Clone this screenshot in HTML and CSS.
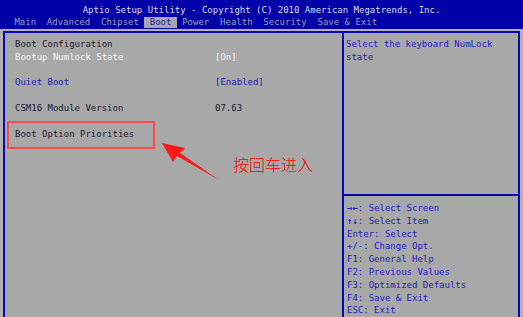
FILE: index.html
```html
<!DOCTYPE html>
<html lang="en">

<head>
    <meta charset="UTF-8">
    <title>Aptio Setup Utility - Boot</title>
    <link rel="stylesheet" href="styles.css">
</head>

<body>
    <div class="bios">
        <div class="header">
            <div class="title">Aptio Setup Utility - Copyright (C) 2010 American Megatrends, Inc.</div>
            <div class="tabs">
                <span class="tab">Main</span>
                <span class="tab">Advanced</span>
                <span class="tab">Chipset</span>
                <span class="tab active">Boot</span>
                <span class="tab">Power</span>
                <span class="tab">Health</span>
                <span class="tab">Security</span>
                <span class="tab">Save &amp; Exit</span>
            </div>
        </div>

        <div class="panel">
            <div class="settings">
                <div class="row heading"><span class="label">Boot Configuration</span></div>
                <div class="row selected"><span class="label">Bootup Numlock State</span><span class="value">[On]</span></div>
                <div class="row"></div>
                <div class="row option"><span class="label">Quiet Boot</span><span class="value">[Enabled]</span></div>
                <div class="row"></div>
                <div class="row heading"><span class="label">CSM16 Module Version</span><span class="value">07.63</span></div>
                <div class="row"></div>
                <div class="row heading"><span class="label">Boot Option Priorities</span></div>
            </div>
            <div class="side">
                <div class="description">Select the keyboard NumLock<br>state</div>
                <div class="help">
                    <div class="key"><b>&#x2192;&#x2190;</b>: Select Screen</div>
                    <div class="key"><b>&#x2191;&#x2193;</b>: Select Item</div>
                    <div class="key">Enter: Select</div>
                    <div class="key">+/-: Change Opt.</div>
                    <div class="key">F1: General Help</div>
                    <div class="key">F2: Previous Values</div>
                    <div class="key">F3: Optimized Defaults</div>
                    <div class="key">F4: Save &amp; Exit</div>
                    <div class="key">ESC: Exit</div>
                </div>
            </div>
        </div>

        <!-- annotation drawn over the screen -->
        <div class="mark"></div>
        <svg class="arrow" width="70" height="50" viewBox="155 135 70 50">
            <polygon points="162,143 185,148 180,153 219,180 177,156 173,162" fill="#ff1a1a" />
        </svg>
        <div class="note">按回车进入</div>
    </div>
</body>

</html>
```

FILE: styles.css
```css
* {
    margin: 0;
    padding: 0;
    box-sizing: border-box;
}

body {
    background-color: #b2b2b2;
    font-family: 'DejaVu Sans Mono', 'Liberation Mono', monospace;
    font-size: 9px;
}

.bios {
    position: relative;
    width: 523px;
    height: 317px;
    overflow: hidden;
}

.header {
    background-color: #0000a8;
    height: 29px;
}

.title {
    color: #dcdcec;
    text-align: center;
    padding-top: 3px;
    line-height: 14px;
}

.tabs {
    display: flex;
    padding-left: 9px;
    line-height: 11px;
}

.tab {
    color: #8aa0bc;
    padding: 0 5.4px;
    white-space: pre;
}

.tab.active {
    background-color: #a8a8a8;
    color: #1c1ca8;
}

.panel {
    display: flex;
    margin: 2px 3px 0 3px;
    height: 300px;
    background-color: #a8a8a8;
    border: 2px solid #0a0ab4;
    border-bottom: none;
}

.settings {
    width: 339px;
    padding: 5px 0 0 10px;
    line-height: 12.8px;
    border-right: 2px solid #0a0ab4;
}

.row {
    display: flex;
    height: 12.8px;
}

.label {
    width: 200px;
    white-space: pre;
}

.heading {
    color: #1a1a2a;
}

.selected {
    color: #f4f4f4;
}

.option {
    color: #1c1cb0;
}

.side {
    flex: 1;
    display: flex;
    flex-direction: column;
    color: #2222c0;
    line-height: 12.8px;
}

.description {
    height: 163px;
    padding: 5px 0 0 2px;
    border-bottom: 2px solid #0a0ab4;
}

.help {
    padding: 6px 0 0 3px;
}

.key {
    height: 12.8px;
    white-space: nowrap;
}

.key b {
    font-weight: bold;
}

.mark {
    position: absolute;
    left: 7px;
    top: 121px;
    width: 148px;
    height: 28px;
    border: 2px solid #ff4a4a;
}

.arrow {
    position: absolute;
    left: 155px;
    top: 135px;
}

.note {
    position: absolute;
    left: 233px;
    top: 154px;
    color: #ff0000;
    font-family: 'Noto Sans CJK SC', sans-serif;
    font-size: 16px;
    font-weight: 300;
    line-height: 20px;
}
```
